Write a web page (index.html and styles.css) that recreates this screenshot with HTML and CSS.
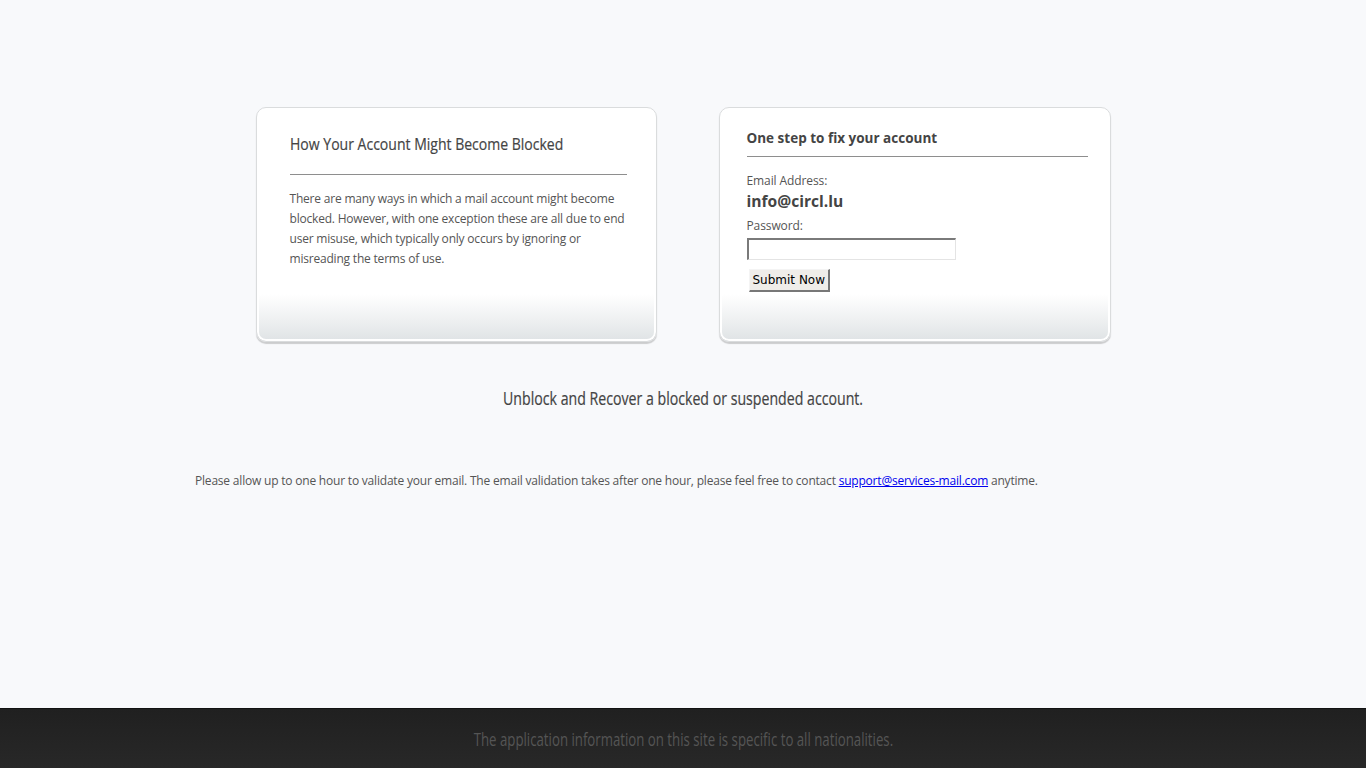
FILE: index.html
```html
<!DOCTYPE html>
<html lang="en">
<head>
<meta charset="utf-8">
<title>Unblock account</title>
<link rel="stylesheet" href="styles.css">
</head>
<body>
<div class="page">
  <main class="container">
    <div class="cards">
      <section class="card card-left">
        <h2 class="card-title-condensed"><span class="squeeze squeeze-left">How Your Account Might Become Blocked</span></h2>
        <hr class="rule">
        <p class="card-text">There are many ways in which a mail account might become blocked. However, with one exception these are all due to end user misuse, which typically only occurs by ignoring or misreading the terms of use.</p>
      </section>
      <section class="card card-right">
        <h3 class="card-title-bold">One step to fix your account</h3>
        <hr class="rule rule-right">
        <form class="form" onsubmit="return false;">
          <div class="label">Email Address:</div>
          <div class="email">info@circl.lu</div>
          <div class="label label-pass">Password:</div>
          <input class="pass-input" type="password">
          <button class="submit" type="submit">Submit Now</button>
        </form>
      </section>
    </div>
    <h1 class="tagline"><span class="squeeze squeeze-tagline">Unblock and Recover a blocked or suspended account.</span></h1>
    <p class="notice">Please allow up to one hour to validate your email. The email validation takes after one hour, please feel free to contact <a href="#">support@services-mail.com</a> anytime.</p>
  </main>
  <footer class="footer">
    <p class="footer-text"><span class="squeeze squeeze-footer">The application information on this site is specific to all nationalities.</span></p>
  </footer>
</div>
</body>
</html>
```

FILE: styles.css
```css
html, body {
  margin: 0;
  padding: 0;
  height: 100%;
}
body {
  background: #f8f9fb;
  font-family: "Open Sans", "DejaVu Sans", sans-serif;
  color: #555;
}
.page {
  min-height: 100%;
  display: flex;
  flex-direction: column;
}
.container {
  width: 976px;
  margin: 0 auto;
  flex: 1;
  padding-top: 107px;
}
.cards {
  display: flex;
  justify-content: center;
  gap: 62px;
}
.card {
  box-sizing: border-box;
  height: 235px;
  background: linear-gradient(to bottom, #ffffff 0%, #ffffff 80%, #eef0f1 91%, #dfe3e5 100%);
  border: 1px solid #dadcdd;
  border-radius: 10px;
  box-shadow: 0 2px 1px rgba(0,0,0,0.18), inset 0 0 0 2px #fff;
}
.card-left {
  width: 401px;
  padding: 24px 29px 0 33px;
}
.card-right {
  width: 392px;
  padding: 20px 22px 0 27px;
}
.squeeze {
  display: inline-block;
  white-space: nowrap;
}
.squeeze-left {
  transform: scaleX(0.825);
  transform-origin: left center;
}
.squeeze-tagline {
  transform: scaleX(0.786);
  transform-origin: center center;
}
.squeeze-footer {
  transform: scaleX(0.778);
  transform-origin: center center;
}
.card-title-condensed {
  margin: 0;
  font-weight: normal;
  font-size: 17px;
  line-height: 24px;
  color: #444;
  white-space: nowrap;
  -webkit-text-stroke: 0.2px #444;
}
.rule {
  border: 0;
  border-top: 1px solid #8e8e8e;
  margin: 18px 0 0 0;
  height: 0;
}
.card-text {
  margin: 14px 0 0 0;
  font-size: 12px;
  letter-spacing: -0.2px;
  line-height: 20px;
  color: #555;
}
.card-title-bold {
  margin: 0;
  font-size: 13.5px;
  font-weight: bold;
  line-height: 20px;
  color: #444;
}
.rule-right {
  margin-top: 8px;
}
.form {
  display: flex;
  flex-direction: column;
  align-items: flex-start;
  margin-top: 14px;
}
.label {
  font-size: 12px;
  letter-spacing: -0.1px;
  line-height: 20px;
  color: #555;
}
.email {
  font-size: 15.6px;
  font-weight: bold;
  line-height: 18px;
  margin-top: 1px;
  margin-bottom: 1px;
  color: #444;
}
.label-pass {
  margin-top: 5px;
}
.pass-input {
  box-sizing: border-box;
  width: 209px;
  height: 22px;
  margin: 2px 0 0 0;
  border-width: 2px 1px 1px 2px;
  border-style: solid;
  border-color: #7a7a7a #e4e4e4 #e4e4e4 #7a7a7a;
  background: #fff;
  padding: 1px 2px;
}
.submit {
  margin: 9px 0 0 2px;
  box-sizing: border-box;
  height: 23px;
  padding: 0 3px;
  font-family: "DejaVu Sans", sans-serif;
  font-size: 12px;
  color: #000;
  background: #efede9;
  border-width: 1px 2px 2px 1px;
  border-style: solid;
  border-color: #f4f4f4 #777 #777 #f4f4f4;
}
.tagline {
  margin: 41px 0 0 0;
  text-align: center;
  font-weight: normal;
  font-size: 18px;
  line-height: 30px;
  color: #444;
  -webkit-text-stroke: 0.2px #444;
}
.notice {
  margin: 58px 0 0 0;
  font-size: 12px;
  letter-spacing: -0.2px;
  line-height: 20px;
  color: #555;
}
.notice a {
  color: #0000ee;
}
.footer {
  height: 60px;
  box-sizing: border-box;
  border-top: 1px solid #121212;
  background: linear-gradient(to bottom, #202020, #282828);
  display: flex;
  align-items: center;
  justify-content: center;
}
.footer-text {
  margin: 0;
  font-size: 17.5px;
  line-height: 24px;
  color: #555;
  text-align: center;
}
.footer-text .squeeze-footer {
  transform: scaleX(0.756);
}
```
